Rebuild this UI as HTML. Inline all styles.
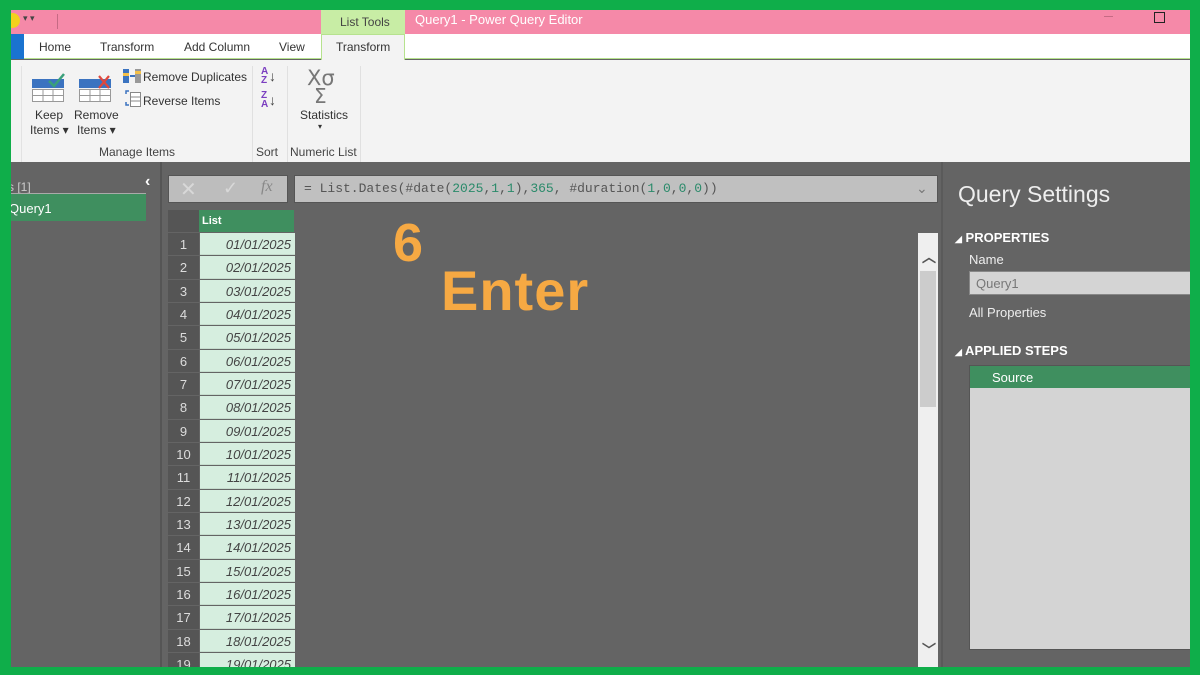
<!DOCTYPE html>
<html><head><meta charset="utf-8"><style>
*{margin:0;padding:0;box-sizing:border-box}
body{width:1200px;height:675px;overflow:hidden;background:#0fae4a;font-family:"Liberation Sans",sans-serif;position:relative}
.a{position:absolute}
.t{font-size:12px;color:#333;white-space:nowrap}
.row{position:absolute;left:168px;width:127px;height:23.33px}
.rn{position:absolute;left:0;top:0;width:31px;height:22.3px;background:#555;color:#ddd;font-size:13px;text-align:center;line-height:23px}
.rv{position:absolute;left:32px;top:0;width:95px;height:22.3px;background:#d6eedf;color:#444;font-size:13px;font-style:italic;text-align:right;padding-right:4px;line-height:23px;border-bottom:1px solid #c5dccd}
</style></head><body>
<div class="a" style="left:11px;top:10px;width:1179px;height:657px;background:#646464;overflow:hidden">
 <div class="a" style="left:0;top:0;width:1179px;height:24px;background:#f589a8"></div>
 <div class="a" style="left:-6px;top:3px;width:15px;height:15px;border-radius:50%;background:#f3d21c"></div>
 <div class="a t" style="left:12px;top:3px;font-size:9px;color:#444">▾ ▾</div>
 <div class="a" style="left:46px;top:4px;width:1px;height:15px;background:#c56a84"></div>
 <div class="a" style="left:310px;top:0;width:84px;height:25px;background:#c8eda5"></div>
 <div class="a t" style="left:329px;top:5px;color:#444">List Tools</div>
 <div class="a t" style="left:404px;top:2px;color:#fff;font-size:13px">Query1 - Power Query Editor</div>
 <div class="a" style="left:1093px;top:6px;width:9px;height:1px;background:#c56a84"></div>
 <div class="a" style="left:1143px;top:2px;width:11px;height:11px;border:1.5px solid #222"></div>
 <div class="a" style="left:0;top:24px;width:1179px;height:25px;background:#fff;border-bottom:1px solid #b6e28e"></div>
 <div class="a" style="left:0;top:24px;width:13px;height:25px;background:#1a73d0"></div>
 <div class="a t" style="left:28px;top:30px">Home</div>
 <div class="a t" style="left:89px;top:30px">Transform</div>
 <div class="a t" style="left:173px;top:30px">Add Column</div>
 <div class="a t" style="left:268px;top:30px">View</div>
 <div class="a" style="left:310px;top:24px;width:84px;height:26px;background:#f3f3f3;border:1px solid #b6e28e;border-bottom:none"></div>
 <div class="a t" style="left:325px;top:30px">Transform</div>
 <div class="a" style="left:0;top:50px;width:1179px;height:102px;background:#f3f3f3"></div>
 <div class="a" style="left:10px;top:56px;width:1px;height:96px;background:#e2e2e2"></div>
 <div class="a" style="left:241px;top:56px;width:1px;height:96px;background:#e0e0e0"></div>
 <div class="a" style="left:276px;top:56px;width:1px;height:96px;background:#e0e0e0"></div>
 <div class="a" style="left:349px;top:56px;width:1px;height:96px;background:#e0e0e0"></div>
 <svg class="a" style="left:21px;top:58px" width="90" height="34">
  <rect x="0" y="11" width="32" height="9" fill="#3b73c0"/><path d="M17 13l5 5 10-12" stroke="#3aa07a" stroke-width="2.5" fill="none"/>
  <g stroke="#999" fill="#fff"><rect x="0.5" y="21.5" width="31" height="12"/><path d="M11 21v13M21 21v13M0 27.5h32"/></g>
  <rect x="47" y="11" width="32" height="9" fill="#3b73c0"/><path d="M67 8l10 12M77 8l-10 12" stroke="#e0483c" stroke-width="2.2"/>
  <g stroke="#999" fill="#fff"><rect x="47.5" y="21.5" width="31" height="12"/><path d="M58 21v13M68 21v13M47 27.5h32"/></g>
 </svg>
 <div class="a t" style="left:24px;top:98px">Keep</div>
 <div class="a t" style="left:19px;top:113px">Items ▾</div>
 <div class="a t" style="left:63px;top:98px">Remove</div>
 <div class="a t" style="left:66px;top:113px">Items ▾</div>
 <svg class="a" style="left:111px;top:58px" width="22" height="44">
  <rect x="1" y="1" width="6" height="14" fill="#3b73c0"/><rect x="1" y="5" width="6" height="3" fill="#f3c04a"/><path d="M8 8h5" stroke="#3b73c0" stroke-width="2"/>
  <rect x="13" y="1" width="6" height="14" fill="#999"/><rect x="13" y="3" width="6" height="3" fill="#f3c04a"/>
  <path d="M4 26v-3h3M4 34v3h3" stroke="#3b73c0" stroke-width="1.5" fill="none"/><rect x="8.5" y="24.5" width="10" height="14" fill="#fff" stroke="#888"/><path d="M9 29h9M9 33h9" stroke="#888"/>
 </svg>
 <div class="a t" style="left:132px;top:60px">Remove Duplicates</div>
 <div class="a t" style="left:132px;top:84px">Reverse Items</div>
 <div class="a" style="left:250px;top:57px;font-size:10px;line-height:9px;color:#7b3ec0;font-weight:bold">A<br>Z</div>
 <div class="a" style="left:258px;top:58px;font-size:14px;color:#444">↓</div>
 <div class="a" style="left:250px;top:81px;font-size:10px;line-height:9px;color:#7b3ec0;font-weight:bold">Z<br>A</div>
 <div class="a" style="left:258px;top:82px;font-size:14px;color:#444">↓</div>
 <div class="a" style="left:296px;top:58px;font-size:21px;color:#777;font-family:'DejaVu Sans',sans-serif;line-height:20px">Χσ</div>
 <div class="a" style="left:303px;top:74px;font-size:20px;color:#777;font-family:'DejaVu Sans',sans-serif">Σ</div>
 <div class="a t" style="left:289px;top:98px">Statistics</div>
 <div class="a t" style="left:307px;top:112px;font-size:8px">▾</div>
 <div class="a t" style="left:88px;top:135px;color:#444">Manage Items</div>
 <div class="a t" style="left:245px;top:135px;color:#444">Sort</div>
 <div class="a t" style="left:279px;top:135px;color:#444">Numeric List</div>
 <div class="a" style="left:149px;top:152px;width:2px;height:505px;background:#555"></div>
 <div class="a t" style="left:-3px;top:170px;color:#ccc">s [1]</div>
 <div class="a" style="left:134px;top:163px;color:#fff;font-size:16px;font-weight:bold">‹</div>
 <div class="a" style="left:0;top:183px;width:135px;height:1px;background:#aaa"></div>
 <div class="a" style="left:0;top:184px;width:135px;height:27px;background:#3f8f5f"></div>
 <div class="a t" style="left:-2px;top:191px;color:#fff;font-size:13px">Query1</div>
 <div class="a" style="left:157px;top:165px;width:120px;height:28px;background:#bdbdbd;border:1px solid #555"></div>
 <div class="a" style="left:169px;top:167px;color:#d8d8d8;font-size:20px">✕</div>
 <div class="a" style="left:212px;top:168px;color:#d8d8d8;font-size:18px">✓</div>
 <div class="a" style="left:250px;top:168px;color:#888;font-size:16px;font-style:italic;font-family:'Liberation Serif',serif">fx</div>
 <div class="a" style="left:283px;top:165px;width:644px;height:28px;background:#c0c0c0;border:1px solid #555"></div>
 <div class="a" style="left:293px;top:171px;font-family:'Liberation Mono',monospace;font-size:13px;color:#555;white-space:nowrap">= List.Dates(#date(<span style="color:#2a8a6a">2025</span>,<span style="color:#2a8a6a">1</span>,<span style="color:#2a8a6a">1</span>),<span style="color:#2a8a6a">365</span>, #duration(<span style="color:#2a8a6a">1</span>,<span style="color:#2a8a6a">0</span>,<span style="color:#2a8a6a">0</span>,<span style="color:#2a8a6a">0</span>))</div>
 <div class="a" style="left:905px;top:170px;color:#777;font-size:14px">⌄</div>
 <div class="a" style="left:157px;top:200px;width:31px;height:22px;background:#555"></div>
 <div class="a" style="left:188px;top:200px;width:95px;height:22px;background:#3f8f5f;color:#fff;font-size:11px;font-weight:bold;padding:5px 0 0 3px">List</div>
 <div id="rows"></div>
 <div class="a" style="left:907px;top:223px;width:20px;height:434px;background:#efefef"></div>
 <div class="a" style="left:909px;top:261px;width:16px;height:136px;background:#ccc"></div>
 <div class="a" style="left:911px;top:237px;color:#555;font-size:14px;font-weight:bold">︿</div>
 <div class="a" style="left:911px;top:630px;color:#555;font-size:14px;font-weight:bold">﹀</div>
 <div class="a" style="left:930px;top:152px;width:2px;height:505px;background:#5a5a5a"></div>
 <div class="a" style="left:947px;top:171px;font-size:23px;color:#eee">Query Settings</div>
 <div class="a t" style="left:944px;top:220px;color:#fff;font-size:13px;font-weight:bold"><span style="font-size:9px">◢</span> PROPERTIES</div>
 <div class="a t" style="left:958px;top:242px;color:#eee;font-size:13px">Name</div>
 <div class="a" style="left:958px;top:261px;width:230px;height:24px;background:#d4d4d4;border:1px solid #888;color:#777;font-size:13px;padding:4px 6px">Query1</div>
 <div class="a t" style="left:958px;top:295px;color:#eee;font-size:13px">All Properties</div>
 <div class="a t" style="left:944px;top:333px;color:#fff;font-size:13px;font-weight:bold"><span style="font-size:9px">◢</span> APPLIED STEPS</div>
 <div class="a" style="left:958px;top:355px;width:230px;height:285px;background:#d4d4d4;border:1px solid #555"></div>
 <div class="a" style="left:959px;top:356px;width:229px;height:22px;background:#3f8f5f;color:#fff;font-size:13px;padding:4px 0 0 22px">Source</div>
 <div class="a" style="left:382px;top:202px;font-size:54px;font-weight:bold;color:#f6a943">6</div>
 <div class="a" style="left:430px;top:248px;font-size:56px;font-weight:bold;color:#f6a943;letter-spacing:1px">Enter</div>
</div>
<script>
var h='';for(var i=1;i<=19;i++){var d=(i<10?'0':'')+i;h+='<div class="row" style="left:157px;top:'+(223+(i-1)*23.33)+'px"><div class="rn">'+i+'</div><div class="rv">'+d+'/01/2025</div></div>';}
document.getElementById('rows').innerHTML=h;
</script>
</body></html>
